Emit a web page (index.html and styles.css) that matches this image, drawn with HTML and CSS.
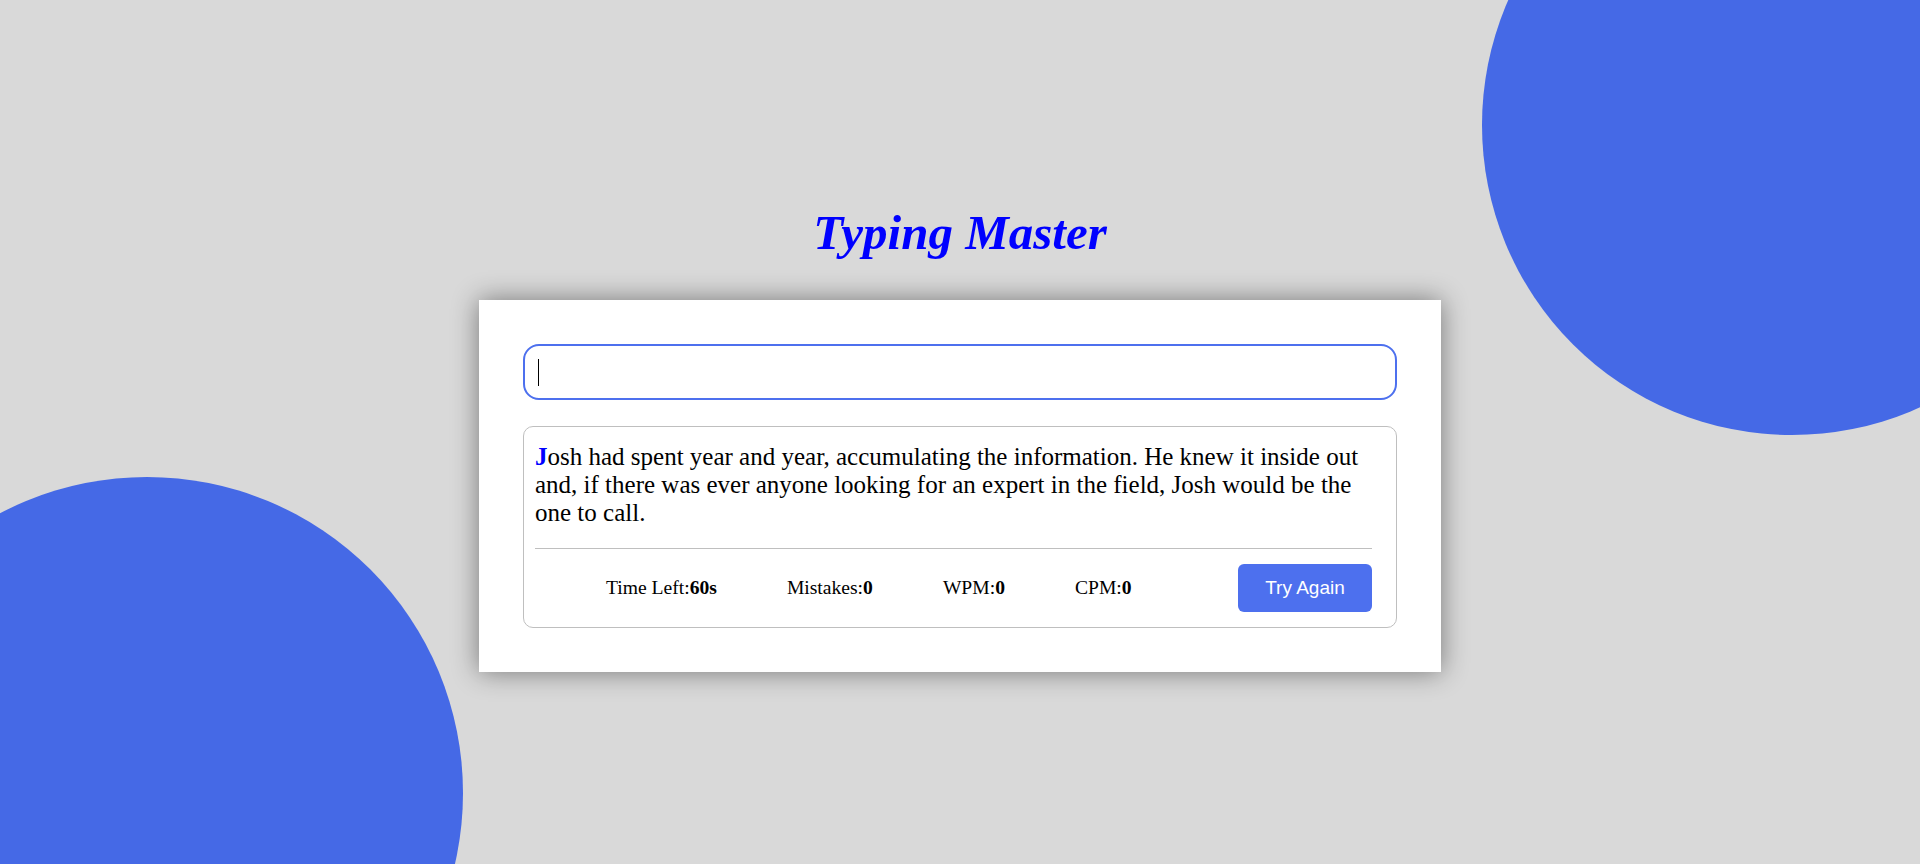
FILE: index.html
```html
<!DOCTYPE html>
<html lang="en">
<head>
  <meta charset="UTF-8" />
  <meta name="viewport" content="width=device-width, initial-scale=1.0" />
  <title>Typing Master</title>
  <link rel="stylesheet" href="styles.css">
</head>
<body>
  <div class="circle circle-top"></div>
  <div class="circle circle-bottom"></div>

  <div class="page">
    <h1>Typing Master</h1>
    <div class="wrapper">
      <div class="input-wrap">
        <input type="text" class="input-field" autofocus>
      </div>
      <div class="content-box">
        <p class="typing-text"><span class="active">J</span>osh had spent year and year, accumulating the information. He knew it inside out and, if there was ever anyone looking for an expert in the field, Josh would be the one to call.</p>
        <div class="content">
          <ul class="result-details">
            <li>Time Left:<b>60s</b></li>
            <li>Mistakes:<b>0</b></li>
            <li>WPM:<b>0</b></li>
            <li>CPM:<b>0</b></li>
          </ul>
          <button class="try-again">Try Again</button>
        </div>
      </div>
    </div>
  </div>
</body>
</html>
```

FILE: styles.css
```css
body {
  margin: 0;
  background: #d9d9d9;
  font-family: "Liberation Serif", "Times New Roman", serif;
  color: black;
  height: 100vh;
  overflow: hidden;
  position: relative;
}

.circle {
  position: absolute;
  border-radius: 50%;
  background: #4569e6;
}

.circle-top {
  width: 620px;
  height: 620px;
  left: 1482px;
  top: -185px;
}

.circle-bottom {
  width: 632px;
  height: 632px;
  left: -169px;
  top: 477px;
}

.page {
  position: relative;
  z-index: 1;
  padding-top: 204px;
  display: flex;
  flex-direction: column;
  align-items: center;
}

h1 {
  margin: 0 0 39px;
  font-size: 49px;
  font-style: italic;
  font-weight: bold;
  color: #0000ff;
}

.wrapper {
  width: 874px;
  padding: 44px;
  background: white;
  box-shadow: 0 0 25px rgba(0, 0, 0, 0.45);
}

.input-wrap {
  position: relative;
  margin: 0 0 26px;
}

.input-wrap::after {
  content: "";
  position: absolute;
  left: 15px;
  top: 15px;
  width: 1px;
  height: 27px;
  background: black;
}

.input-field {
  display: block;
  box-sizing: border-box;
  width: 100%;
  height: 56px;
  margin: 0;
  padding: 0 12px;
  border: 2px solid #4d70ee;
  border-radius: 16px;
  outline: none;
  caret-color: transparent;
  font-size: 24px;
  font-family: "Liberation Serif", serif;
}

.content-box {
  border: 1px solid #bfbfbf;
  border-radius: 10px;
  padding: 16px 24px 0 11px;
}

.typing-text {
  margin: 0 0 21px;
  font-size: 25px;
}

.typing-text .active {
  color: #0000ff;
  font-weight: bold;
}

.content {
  display: flex;
  align-items: center;
  border-top: 1px solid #bfbfbf;
  padding: 15px 0;
}

.result-details {
  display: flex;
  gap: 70px;
  list-style: none;
  margin: 0;
  padding: 0 0 0 71px;
  font-size: 19.6px;
}

.try-again {
  margin-left: auto;
  width: 134px;
  height: 48px;
  border: none;
  border-radius: 6px;
  background: #4d70ee;
  color: white;
  font-family: "Liberation Sans", Arial, sans-serif;
  font-size: 19px;
  cursor: pointer;
}
```
